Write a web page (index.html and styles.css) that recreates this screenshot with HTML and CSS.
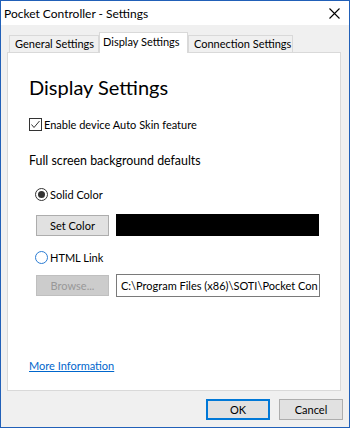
FILE: index.html
```html
<!DOCTYPE html>
<html lang="en">
<head>
    <meta charset="UTF-8">
    <title>Pocket Controller - Settings</title>
    <link rel="stylesheet" href="styles.css">
</head>
<body>
    <div class="window">
        <div class="titlebar">
            <span class="title">Pocket Controller - Settings</span>
            <svg class="close" width="11" height="11" viewBox="0 0 11 11">
                <path d="M0.5 0.5 L10.5 10.5 M10.5 0.5 L0.5 10.5" stroke="#000" stroke-width="1.1" fill="none"/>
            </svg>
        </div>

        <div class="client">
            <!-- Abas -->
            <div class="tabs">
                <div class="tab tab-general">General Settings</div>
                <div class="tab tab-display active">Display Settings</div>
                <div class="tab tab-connection">Connection Settings</div>
            </div>

            <div class="panel">
                <h1>Display Settings</h1>

                <div class="check-row">
                    <span class="checkbox">
                        <svg width="11" height="11" viewBox="0 0 11 11">
                            <path d="M1.5 5.5 L4 8.5 L9.5 2" stroke="#333" stroke-width="1" fill="none"/>
                        </svg>
                    </span>
                    Enable device Auto Skin feature
                </div>

                <div class="group-title">Full screen background defaults</div>

                <div class="radio-row">
                    <span class="radio checked"><span class="dot"></span></span>
                    Solid Color
                </div>
                <div class="field-row row-color">
                    <button class="btn btn-side">Set Color</button>
                    <div class="color-box"></div>
                </div>

                <div class="radio-row row-link">
                    <span class="radio hover"></span>
                    HTML Link
                </div>
                <div class="field-row row-browse">
                    <button class="btn btn-side" disabled>Browse...</button>
                    <div class="path-field">C:\Program Files (x86)\SOTI\Pocket Con</div>
                </div>

                <a class="more-info" href="#">More Information</a>
            </div>

            <div class="footer">
                <button class="btn btn-ok">OK</button>
                <button class="btn btn-cancel">Cancel</button>
            </div>
        </div>
    </div>
</body>
</html>
```
FILE: styles.css
```css
body {
    margin: 0;
    font-family: Lato, "Liberation Sans", sans-serif;
    font-size: 11px;
    color: #000;
}

.window {
    width: 350px;
    height: 428px;
    box-sizing: border-box;
    border: 1px solid #2160b8;
    display: flex;
    flex-direction: column;
    background: #f0f0f0;
}

.titlebar {
    height: 24px;
    background: white;
    display: flex;
    align-items: center;
    padding-left: 3px;
}

.title {
    font-size: 12px;
    flex: 1;
}

.close {
    margin-right: 9px;
    margin-top: 1px;
}

.client {
    flex: 1;
    display: flex;
    flex-direction: column;
}

.tabs {
    display: flex;
    align-items: flex-end;
    padding: 7px 0 0 8px;
}

.tab {
    height: 17px;
    box-sizing: border-box;
    border: 1px solid #d9d9d9;
    border-bottom: none;
    background: #f0f0f0;
    line-height: 16px;
    padding-left: 5px;
    white-space: nowrap;
}

.tab-general { width: 90px; }
.tab-display { width: 89px; padding-left: 3px; }
.tab-connection { width: 105px; }

.tab.active {
    height: 21px;
    margin-bottom: -1px;
    padding-top: 1px;
    background: white;
    position: relative;
    z-index: 1;
}

.panel {
    margin-left: 6px;
    width: 334px;
    height: 339px;
    box-sizing: border-box;
    border: 1px solid #d9d9d9;
    background: white;
    padding: 22px 0 0 21px;
    display: flex;
    flex-direction: column;
    align-items: flex-start;
}

h1 {
    margin: 0;
    font-size: 20px;
    font-weight: normal;
    line-height: 24px;
}

.check-row {
    margin-top: 19px;
    height: 13px;
    display: flex;
    align-items: center;
}

.checkbox {
    width: 13px;
    height: 13px;
    box-sizing: border-box;
    border: 1px solid #333;
    margin-right: 2px;
    display: flex;
}

.group-title {
    margin-top: 22px;
    font-size: 12.4px;
    line-height: 16px;
}

.radio-row {
    margin-top: 19px;
    margin-left: 6px;
    height: 13px;
    display: flex;
    align-items: center;
}

.row-link {
    margin-top: 15px;
}

.radio {
    width: 13px;
    height: 13px;
    box-sizing: border-box;
    border: 1px solid #333;
    border-radius: 50%;
    margin-right: 2px;
    display: flex;
    align-items: center;
    justify-content: center;
    background: white;
}

.radio.hover {
    border-color: #2b7cd3;
}

.dot {
    width: 7px;
    height: 7px;
    border-radius: 50%;
    background: #333;
}

.field-row {
    margin-left: 7px;
    display: flex;
    gap: 7px;
}

.row-color {
    margin-top: 13px;
    align-items: flex-end;
}

.row-browse {
    margin-top: 10px;
    align-items: center;
}

.btn {
    font-family: inherit;
    font-size: 11px;
    color: #000;
    background: #e1e1e1;
    border: 1px solid #adadad;
    padding: 0;
    height: 21px;
    box-sizing: border-box;
}

.btn-side {
    width: 73px;
}

.btn:disabled {
    background: #cccccc;
    border-color: #bfbfbf;
    color: #989898;
}

.color-box {
    width: 203px;
    height: 22px;
    background: #000;
}

.path-field {
    width: 204px;
    height: 23px;
    box-sizing: border-box;
    border: 1px solid #7a7a7a;
    padding-left: 4px;
    line-height: 21px;
    white-space: nowrap;
    overflow: hidden;
    background: white;
}

.more-info {
    margin-top: 62px;
    color: #0066cc;
    line-height: 14px;
}

.footer {
    display: flex;
    justify-content: flex-end;
    gap: 9px;
    padding: 8px 6px 0 0;
}

.btn-ok,
.btn-cancel {
    width: 64px;
}

.btn-ok {
    border: 2px solid #0078d7;
}
```
